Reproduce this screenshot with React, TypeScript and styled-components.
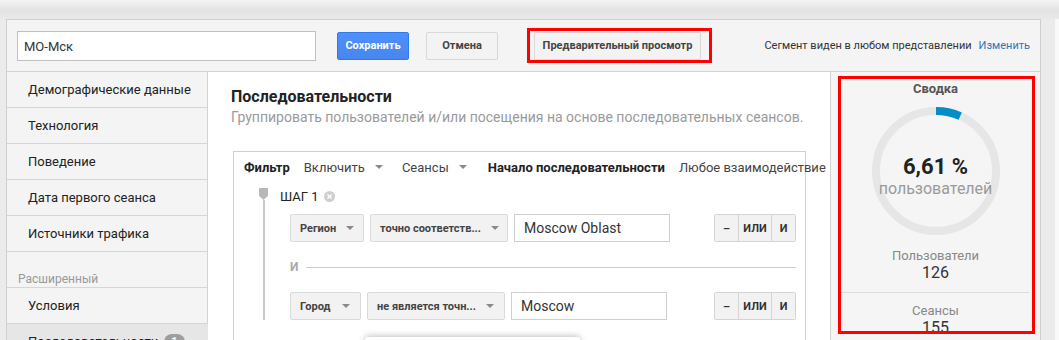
import React from 'react';
import styled, { createGlobalStyle } from 'styled-components';

const GlobalStyle = createGlobalStyle`
  html, body {
    margin: 0;
    padding: 0;
  }
  body {
    font-family: Roboto, 'Liberation Sans', Arial, sans-serif;
    color: #222;
    background: #ebebeb;
  }
`;

const Page = styled.div`
  width: 1059px;
  height: 340px;
  overflow: hidden;
  box-sizing: border-box;
  padding: 19px 0 0 6px;
  background: linear-gradient(#f4f4f4 0px, #e3e3e3 10px, #e9e9e9 19px),
    linear-gradient(to right, #ebebeb 1055px, #f9f9f9 1055px);
  background-size: 100% 19px, 100% 100%;
  background-repeat: no-repeat;
`;

const Panel = styled.div`
  width: 1035px;
  height: 330px;
  box-sizing: border-box;
  border: 1px solid #cfcfcf;
  border-bottom: none;
  background: #f4f4f4;
  display: flex;
  flex-direction: column;
`;

/* ---------- header ---------- */

const Header = styled.div`
  height: 51px;
  flex-shrink: 0;
  display: flex;
  align-items: center;
  padding: 0 10px;
  border-bottom: 1px solid #d2d2d2;
`;

const NameInput = styled.div`
  width: 299px;
  height: 30px;
  box-sizing: border-box;
  border: 1px solid #c0c0c0;
  background: #fff;
  display: flex;
  align-items: center;
  padding-left: 6px;
  font-size: 13px;
  color: #333;
  margin-top: 1px;
`;

const Button = styled.div<{ primary?: boolean }>`
  height: 28px;
  box-sizing: border-box;
  padding: 0 12px;
  display: flex;
  align-items: center;
  justify-content: center;
  border-radius: 2px;
  font-size: 11px;
  font-weight: bold;
  white-space: nowrap;
  color: ${({ primary }) => (primary ? '#fff' : '#444')};
  background: ${({ primary }) =>
    primary ? 'linear-gradient(#4d90fe, #4787ed)' : '#f3f3f3'};
  border: 1px solid ${({ primary }) => (primary ? '#3079ed' : '#d8d8d8')};
`;

const SaveButton = styled(Button)`
  width: 72px;
  margin-left: 21px;
`;

const CancelButton = styled(Button)`
  width: 72px;
  margin-left: 17px;
`;

const Highlight = styled.div`
  margin-left: 29px;
  border: 3px solid #ff0000;
  padding: 0 8px 0 4px;
  display: flex;
  align-items: center;
  height: 29px;
`;

const PreviewButton = styled(Button)`
  width: 167px;
`;

const VisibilityNote = styled.div`
  margin-left: auto;
  font-size: 11px;
  color: #333;
  white-space: nowrap;

  a {
    color: #2f73be;
    text-decoration: none;
    margin-left: 7px;
  }
`;

/* ---------- body ---------- */

const Body = styled.div`
  flex: 1;
  display: grid;
  grid-template-columns: 201px 1fr 210px;
  min-height: 0;
`;

const Sidebar = styled.div`
  border-right: 1px solid #d2d2d2;
  background: #f4f4f4;
`;

const NavItem = styled.div<{ active?: boolean }>`
  position: relative;
  height: 35px;
  border-bottom: 1px solid #d6d6d6;
  display: flex;
  align-items: center;
  padding-left: 21px;
  font-size: 13px;
  color: #222;
  background: ${({ active }) => (active ? '#e6e6e6' : 'transparent')};
  margin-right: ${({ active }) => (active ? '-1px' : '0')};

  ${({ active }) =>
    active &&
    `
    &::after {
      content: '';
      position: absolute;
      right: -18px;
      top: -1px;
      border-left: 18px solid #e6e6e6;
      border-top: 18px solid transparent;
      border-bottom: 18px solid transparent;
    }
    &::before {
      content: '';
      position: absolute;
      right: -20px;
      top: -2px;
      border-left: 19px solid #c8c8c8;
      border-top: 19px solid transparent;
      border-bottom: 19px solid transparent;
    }
  `}
`;

const NavSection = styled.div`
  border-bottom: 1px solid #d6d6d6;
  display: flex;
  align-items: flex-end;
  padding: 0 0 1px 11px;
  box-sizing: border-box;
  height: 36px;
  line-height: 14px;
  font-size: 12px;
  color: #999;
`;

const Badge = styled.span`
  display: inline-block;
  margin-left: 6px;
  padding: 0 7px;
  height: 16px;
  line-height: 16px;
  border-radius: 8px;
  background: #9e9e9e;
  color: #fff;
  font-size: 11px;
  font-weight: bold;
`;

const Main = styled.div`
  position: relative;
  background: #fff;
  padding: 15px 0 0 23px;
  overflow: visible;
  min-width: 0;
`;

const Title = styled.div`
  font-size: 16px;
  font-weight: bold;
  line-height: 19px;
  color: #222;
`;

const Subtitle = styled.div`
  margin-top: 2px;
  font-size: 14px;
  line-height: 18px;
  color: #9a9a9a;
  white-space: nowrap;
`;

const FilterBox = styled.div`
  margin: 25px 0 0 2px;
  width: 571px;
  border: 1px solid #d0d0d0;
  border-bottom: none;
  height: 200px;
`;

const FilterBar = styled.div`
  height: 30px;
  display: flex;
  align-items: center;
  padding-left: 10px;
  font-size: 13px;
  color: #444;
  white-space: nowrap;
  gap: 14px;
`;

const FilterLabel = styled.span<{ bold?: boolean; offset?: number }>`
  font-weight: ${({ bold }) => (bold ? 'bold' : 'normal')};
  color: ${({ bold }) => (bold ? '#222' : '#444')};
  margin-left: ${({ offset }) => offset || 0}px;
  display: inline-flex;
  align-items: center;
`;

const Caret = styled.span`
  display: inline-block;
  width: 0;
  height: 0;
  margin-left: 10px;
  border-left: 4px solid transparent;
  border-right: 4px solid transparent;
  border-top: 4px solid #8a8a8a;
`;

const Step = styled.div`
  display: flex;
  margin-top: 6px;
  padding-left: 25px;
`;

const Track = styled.div`
  width: 9px;
  display: flex;
  flex-direction: column;
  align-items: center;
`;

const Marker = styled.div`
  width: 9px;
  height: 12px;
  background: #b8b8b8;
  clip-path: polygon(0 0, 100% 0, 100% 65%, 50% 100%, 0 65%);
`;

const TrackLine = styled.div`
  flex: 1;
  width: 2px;
  background: #c8c8c8;
`;

const StepContent = styled.div`
  flex: 1;
  padding: 0 9px 0 12px;
  display: flex;
  flex-direction: column;
`;

const StepTitle = styled.div`
  height: 16px;
  display: flex;
  align-items: center;
  font-size: 13px;
  color: #222;
  gap: 5px;
`;

const RemoveIcon = styled.svg`
  width: 11px;
  height: 11px;
`;

const ConditionRow = styled.div<{ spaced?: boolean }>`
  display: flex;
  align-items: center;
  gap: 6px;
  margin: ${({ spaced }) => (spaced ? 14 : 10)}px 0 0 10px;
  height: 28px;
`;

const Select = styled.div<{ width?: number }>`
  height: 28px;
  box-sizing: border-box;
  width: ${({ width }) => (width ? `${width}px` : 'auto')};
  display: flex;
  align-items: center;
  justify-content: space-between;
  padding: 0 10px 0 9px;
  background: #f2f2f2;
  border: 1px solid #dadada;
  border-radius: 2px;
  font-size: 11px;
  font-weight: bold;
  color: #444;
  white-space: nowrap;
`;

const ValueInput = styled.div`
  width: 156px;
  height: 28px;
  box-sizing: border-box;
  border: 1px solid #cfcfcf;
  display: flex;
  align-items: center;
  padding-left: 9px;
  font-size: 14px;
  color: #333;
`;

const LogicGroup = styled.div`
  margin-left: auto;
  display: flex;
  height: 28px;
  border: 1px solid #d4d4d4;
  border-radius: 2px;
  box-sizing: border-box;
`;

const LogicButton = styled.div<{ width: number }>`
  width: ${({ width }) => width}px;
  display: flex;
  align-items: center;
  justify-content: center;
  background: #f2f2f2;
  font-size: 11px;
  font-weight: bold;
  color: #333;

  & + & {
    border-left: 1px solid #d4d4d4;
  }
`;

const AndDivider = styled.div`
  display: flex;
  align-items: center;
  gap: 8px;
  margin: 14px 0 0 10px;
  height: 22px;
  font-size: 12px;
  font-weight: bold;
  color: #aaa;

  &::after {
    content: '';
    flex: 1;
    height: 1px;
    background: #cccccc;
  }
`;

const FloatingCard = styled.div`
  position: absolute;
  left: 157px;
  top: 265px;
  width: 215px;
  height: 40px;
  background: #fff;
  border-radius: 3px;
  box-shadow: 0 -1px 6px rgba(0, 0, 0, 0.25);
`;

/* ---------- summary ---------- */

const Summary = styled.div`
  position: relative;
  border-left: 1px solid #d2d2d2;
  background: #f5f5f5;
  display: flex;
  flex-direction: column;
  align-items: stretch;
  text-align: center;
`;

const SummaryTitle = styled.div`
  margin-top: 9px;
  font-size: 13px;
  line-height: 16px;
  font-weight: bold;
  color: #555;
`;

const Donut = styled.div`
  margin: 9px auto 0;
  width: 130px;
  height: 130px;
  display: grid;

  > * {
    grid-area: 1 / 1;
  }
`;

const DonutText = styled.div`
  align-self: center;
  padding-top: 12px;
`;

const Percent = styled.div`
  font-size: 22px;
  line-height: 24px;
  font-weight: bold;
  color: #222;
`;

const PercentLabel = styled.div`
  font-size: 16px;
  line-height: 20px;
  color: #9a9a9a;
`;

const Stat = styled.div<{ first?: boolean }>`
  margin: 0 10px;
  padding: ${({ first }) => (first ? 12 : 10)}px 0 10px;
  border-bottom: 1px solid #dcdcdc;
`;

const StatLabel = styled.div`
  font-size: 13px;
  line-height: 16px;
  color: #888;
`;

const StatValue = styled.div`
  font-size: 16px;
  line-height: 18px;
  color: #333;
`;

const SummaryHighlight = styled.div`
  position: absolute;
  left: 7px;
  top: 4px;
  width: 197px;
  height: 258px;
  box-sizing: border-box;
  border: 3px solid #ff0000;
  pointer-events: none;
`;

const navItems = [
  'Демографические данные',
  'Технология',
  'Поведение',
  'Дата первого сеанса',
  'Источники трафика',
];

type Condition = {
  dimension: string;
  dimensionWidth: number;
  operator: string;
  value: string;
};

const conditions: Condition[] = [
  {
    dimension: 'Регион',
    dimensionWidth: 74,
    operator: 'точно соответств...',
    value: 'Moscow Oblast',
  },
  {
    dimension: 'Город',
    dimensionWidth: 71,
    operator: 'не является точн...',
    value: 'Moscow',
  },
];

const stats = [
  { label: 'Пользователи', value: '126' },
  { label: 'Сеансы', value: '155' },
  { label: 'Просмотры', value: '1334' },
];

function ConditionLine({
  condition,
  spaced,
}: {
  condition: Condition;
  spaced?: boolean;
}) {
  return (
    <ConditionRow spaced={spaced}>
      <Select width={condition.dimensionWidth}>
        {condition.dimension}
        <Caret />
      </Select>
      <Select width={138}>
        {condition.operator}
        <Caret />
      </Select>
      <ValueInput>{condition.value}</ValueInput>
      <LogicGroup>
        <LogicButton width={23}>–</LogicButton>
        <LogicButton width={32}>ИЛИ</LogicButton>
        <LogicButton width={23}>И</LogicButton>
      </LogicGroup>
    </ConditionRow>
  );
}

function Ring({ percent }: { percent: number }) {
  const r = 60;
  const c = 2 * Math.PI * r;
  const arc = (percent / 100) * c;
  return (
    <svg width="130" height="130" viewBox="0 0 130 130">
      <circle cx="65" cy="65" r={r} fill="none" stroke="#e6e6e6" strokeWidth="8" />
      <circle
        cx="65"
        cy="65"
        r={r}
        fill="none"
        stroke="#058dc7"
        strokeWidth="8"
        strokeDasharray={`${arc} ${c}`}
        transform="rotate(-90 65 65)"
      />
    </svg>
  );
}

export default function App() {
  return (
    <>
      <GlobalStyle />
      <Page>
        <Panel>
          <Header>
            <NameInput>МО-Мск</NameInput>
            <SaveButton primary>Сохранить</SaveButton>
            <CancelButton>Отмена</CancelButton>
            <Highlight>
              <PreviewButton>Предварительный просмотр</PreviewButton>
            </Highlight>
            <VisibilityNote>
              Сегмент виден в любом представлении
              <a href="#">Изменить</a>
            </VisibilityNote>
          </Header>

          <Body>
            <Sidebar>
              {navItems.map((item) => (
                <NavItem key={item}>{item}</NavItem>
              ))}
              <NavSection>Расширенный</NavSection>
              <NavItem>Условия</NavItem>
              <NavItem active>
                Последовательности
                <Badge>1</Badge>
              </NavItem>
            </Sidebar>

            <Main>
              <Title>Последовательности</Title>
              <Subtitle>
                Группировать пользователей и/или посещения на основе
                последовательных сеансов.
              </Subtitle>
              <FilterBox>
                <FilterBar>
                  <FilterLabel bold>Фильтр</FilterLabel>
                  <FilterLabel>
                    Включить
                    <Caret />
                  </FilterLabel>
                  <FilterLabel offset={5}>
                    Сеансы
                    <Caret />
                  </FilterLabel>
                  <FilterLabel bold offset={7}>
                    Начало последовательности
                  </FilterLabel>
                  <FilterLabel>Любое взаимодействие</FilterLabel>
                </FilterBar>
                <Step>
                  <Track>
                    <Marker />
                    <TrackLine />
                  </Track>
                  <StepContent>
                    <StepTitle>
                      ШАГ 1
                      <RemoveIcon viewBox="0 0 12 12">
                        <circle cx="6" cy="6" r="6" fill="#cfcfcf" />
                        <path
                          d="M3.8 3.8 L8.2 8.2 M8.2 3.8 L3.8 8.2"
                          stroke="#fff"
                          strokeWidth="1.5"
                        />
                      </RemoveIcon>
                    </StepTitle>
                    <ConditionLine condition={conditions[0]} />
                    <AndDivider>И</AndDivider>
                    <ConditionLine condition={conditions[1]} spaced />
                  </StepContent>
                </Step>
              </FilterBox>
              <FloatingCard />
            </Main>

            <Summary>
              <SummaryTitle>Сводка</SummaryTitle>
              <Donut>
                <Ring percent={6.61} />
                <DonutText>
                  <Percent>6,61 %</Percent>
                  <PercentLabel>пользователей</PercentLabel>
                </DonutText>
              </Donut>
              {stats.map((stat, index) => (
                <Stat key={stat.label} first={index === 0}>
                  <StatLabel>{stat.label}</StatLabel>
                  <StatValue>{stat.value}</StatValue>
                </Stat>
              ))}
              <SummaryHighlight />
            </Summary>
          </Body>
        </Panel>
      </Page>
    </>
  );
}
